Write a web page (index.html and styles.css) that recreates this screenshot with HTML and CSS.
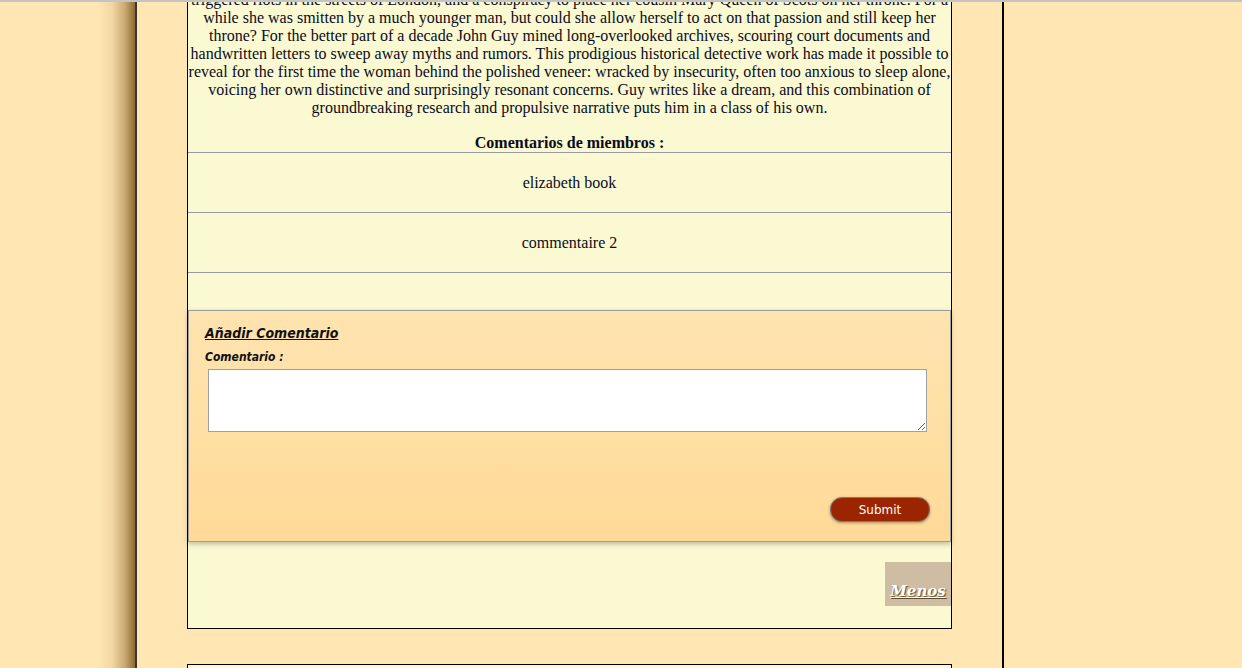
FILE: index.html
```html
<!DOCTYPE html>
<html lang="es">
<head>
<meta charset="utf-8">
<title>Libro</title>
<link rel="stylesheet" href="styles.css">
</head>
<body>
<div class="topline"></div>
<div class="page">
  <div class="side-left"></div>
  <div class="main">
    <div class="card">
      <p class="desc">triggered riots in the streets of London, and a conspiracy to place her cousin Mary Queen of Scots on her throne. For a while she was smitten by a much younger man, but could she allow herself to act on that passion and still keep her throne? For the better part of a decade John Guy mined long-overlooked archives, scouring court documents and handwritten letters to sweep away myths and rumors. This prodigious historical detective work has made it possible to reveal for the first time the woman behind the polished veneer: wracked by insecurity, often too anxious to sleep alone, voicing her own distinctive and surprisingly resonant concerns. Guy writes like a dream, and this combination of groundbreaking research and propulsive narrative puts him in a class of his own.</p>
      <h3 class="comments-title">Comentarios de miembros :</h3>
      <div class="comment">elizabeth book</div>
      <div class="comment">commentaire 2</div>
      <div class="comment-end"></div>
      <form class="add-form">
        <h4 class="add-title">Añadir Comentario</h4>
        <label class="add-label" for="c">Comentario :</label>
        <textarea id="c" class="add-text"></textarea>
        <div class="add-actions">
          <button type="button" class="submit">Submit</button>
        </div>
      </form>
      <div class="more-row">
        <a class="less" href="#">Menos</a>
      </div>
    </div>
    <div class="card card-next"></div>
  </div>
  <div class="side-right"></div>
</div>
</body>
</html>
```

FILE: styles.css
```css
html, body {
  margin: 0;
  padding: 0;
  height: 100%;
}
body {
  background: #FFE6B3;
  font-family: "Liberation Serif", "Times New Roman", serif;
  color: #0b0b1a;
  overflow: hidden;
}
.topline {
  position: absolute;
  top: 0;
  left: 0;
  right: 0;
  height: 2px;
  background: #c4c4c4;
  z-index: 5;
}
.page {
  display: flex;
  height: 668px;
  overflow: hidden;
}
.side-left {
  width: 135px;
  flex: none;
  border-right: 2px solid #363636;
  background: linear-gradient(to right, #FFE6B3 0, #FFE6B3 98px, #F3D7A4 112px, #C9A872 125px, #8E6A30 135px);
}
.main {
  width: 815px;
  flex: none;
  padding-left: 50px;
  border-right: 2px solid #000;
  background: #FFE6B3;
}
.side-right {
  flex: 1;
}
.card {
  width: 763px;
  border: 1px solid #000;
  background: #FAF9D2;
  margin-top: -10px;
}
.card-next {
  margin-top: 35px;
  height: 40px;
}
.desc {
  margin: 0;
  font-size: 16px;
  line-height: 18px;
  text-align: center;
}
.comments-title {
  margin: 17px 0 0;
  font-size: 16px;
  line-height: 18px;
  font-weight: bold;
  text-align: center;
}
.comment {
  border-top: 1px solid #9a9aa4;
  padding: 21px 0 20px;
  font-size: 16px;
  line-height: 18px;
  text-align: center;
}
.comment-end {
  border-top: 1px solid #9a9aa4;
  height: 37px;
}
.add-form {
  margin: 0;
  border: 1px solid #9c9c9c;
  background: linear-gradient(to bottom, #FFE4B0, #FFDA98);
  box-shadow: 0 2px 5px rgba(0, 0, 0, 0.25);
  padding: 13px 20px 19px 16px;
  font-family: "DejaVu Sans Condensed", "DejaVu Sans", Verdana, sans-serif;
}
.add-title {
  margin: 0;
  font-size: 14px;
  line-height: 18px;
  font-weight: bold;
  font-style: italic;
  text-decoration: underline;
  color: #111;
}
.add-label {
  display: block;
  margin-top: 8px;
  font-size: 12px;
  line-height: 14px;
  font-weight: bold;
  font-style: italic;
  color: #111;
}
.add-text {
  display: block;
  box-sizing: border-box;
  width: 719px;
  height: 63px;
  margin: 5px 0 0 3px;
  border: 1px solid #a0a0a0;
  background: #fff;
  resize: vertical;
}
.add-actions {
  display: flex;
  justify-content: flex-end;
  margin-top: 65px;
}
.submit {
  width: 100px;
  height: 25px;
  border: 1px solid #7b7b7b;
  border-radius: 12px;
  background: #9A2500;
  color: #fff;
  font-family: "DejaVu Sans", Verdana, sans-serif;
  font-size: 12px;
  box-shadow: 0 1px 3px rgba(0, 0, 0, 0.35);
  padding: 0;
  margin-right: 0;
}
.more-row {
  display: flex;
  justify-content: flex-end;
  padding: 20px 0 22px;
}
.less {
  display: block;
  width: 66px;
  height: 44px;
  box-sizing: border-box;
  padding-top: 19px;
  text-align: center;
  background: #CEBDA3;
  color: #fff;
  font-family: "DejaVu Serif", Georgia, serif;
  font-size: 15px;
  line-height: 20px;
  font-weight: bold;
  font-style: italic;
  text-decoration: underline;
  text-shadow: 1px 1px 1px #5a4a30;
}
```
